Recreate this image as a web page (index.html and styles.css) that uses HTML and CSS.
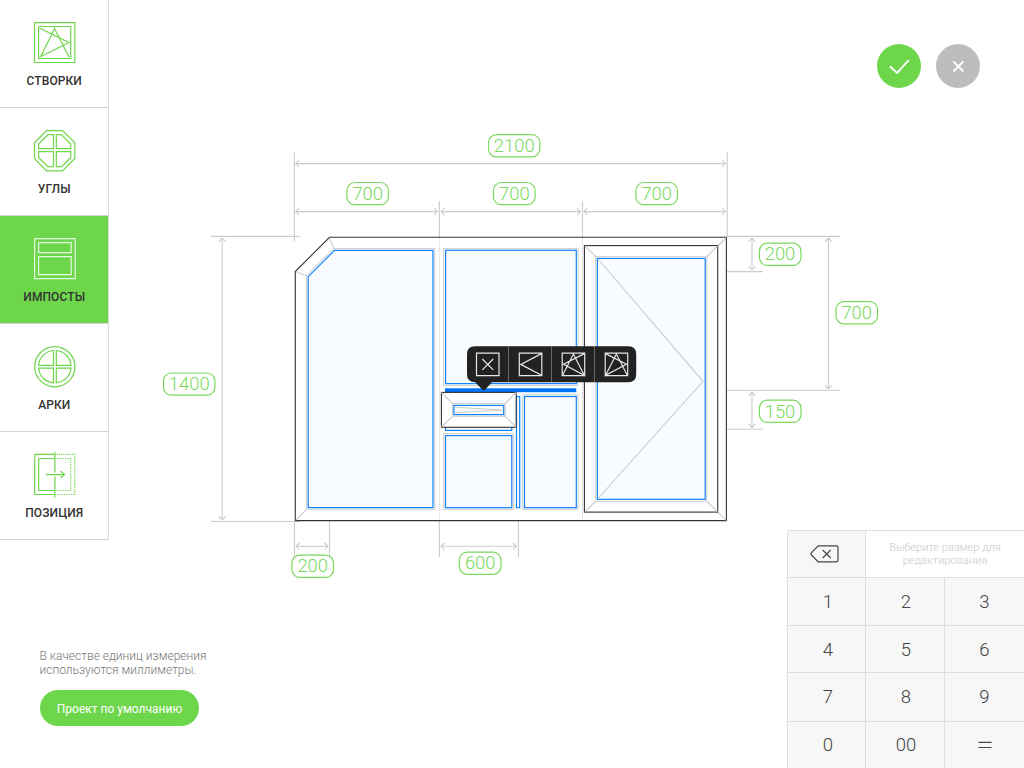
FILE: index.html
```
<!DOCTYPE html>
<html lang="ru">
<head>
<meta charset="utf-8">
<title>Конструктор окон</title>
<link rel="stylesheet" href="styles.css">
</head>
<body>
<div class="page">
  <main class="canvas">
    <svg class="drawing" width="1024" height="768" viewBox="0 0 1024 768">
      <defs>
        <marker id="tip" markerUnits="userSpaceOnUse" markerWidth="6" markerHeight="8" refX="4.5" refY="4" orient="auto-start-reverse">
          <path class="dim" d="M1 .7 4.5 4 1 7.3"/>
        </marker>
      </defs>

      <!-- extension lines -->
      <path class="dim" d="M294.3 152.500V241.500M727.300 152.500V237M439.400 201V237M582.500 201V237M211 236.400H299.500M211 521.500H299.500M727 236.400H840M727 271.600H763M727 390.300H840M727 429.300H763M294.500 521V560M329.500 521V557M439.400 521V557M518.400 521V557"/>
      <!-- dimension arrows -->
      <g class="dim arrows">
        <path d="M295.500 163.600H725.500"/>
        <path d="M295.500 211.600H437.500"/>
        <path d="M441 211.600H580.500"/>
        <path d="M584 211.600H725.500"/>
        <path d="M222.200 238V520"/>
        <path d="M752 238V270"/>
        <path d="M828.400 238V389"/>
        <path d="M752 392V427.500"/>
        <path d="M296 546.300H328"/>
        <path d="M441 546.300H516.500"/>
      </g>

      <!-- outer frame -->
      <path class="frame" d="M329.500 237.300H726.400V520.600H295.300V271.500Z"/>
      <path class="seam" d="M439.400 238V520M582.500 238V520"/>
      <path class="dim" d="M329.500 238 334 248.500M296 271.700 306.700 275.700M296 520 306.700 509.200M726 238 717.700 246M726 520.300 717.700 512"/>

      <!-- fixed glazing -->
      <path class="bead" d="M334 248.500H434.800V509.300H306.600V275.700Z"/>
      <path class="glass" d="M334.600 250.300H433V507.700H308.200V276.700Z"/>
      <rect class="bead" x="443.600" y="248.500" width="134.400" height="137"/>
      <rect class="glass" x="445.600" y="250.300" width="130.700" height="133.300"/>
      <rect class="bead" x="443.600" y="433.600" width="70" height="75.700"/>
      <rect class="glass" x="445.500" y="435.600" width="66.300" height="72.100"/>
      <rect class="bead" x="522.600" y="394.700" width="55.400" height="114.600"/>
      <rect class="glass" x="524.500" y="396.500" width="51.800" height="111.200"/>

      <!-- imposts -->
      <rect class="impost" x="445" y="388.300" width="131.300" height="3.900"/>
      <rect class="glass" x="516.500" y="396.500" width="3.200" height="111.200"/>
      <rect class="glass" x="445.500" y="426.500" width="66.300" height="3.900"/>

      <!-- transom sash -->
      <rect class="frame" x="441.400" y="392.400" width="74.800" height="34.900"/>
      <path class="dim" d="M441.500 392.500 452.500 403.500H505.200L516 392.500M441.500 427 452.500 416.300H505.200L516 427M452.500 403.500V416.300M505.200 403.500V416.300"/>
      <rect class="glass" x="453.900" y="405.400" width="49.800" height="9.200"/>
      <path class="dim" d="M455.500 407.300 502 410 455.500 412.700"/>

      <!-- door sash -->
      <rect class="frame" x="584.400" y="245.600" width="133.300" height="266.500"/>
      <rect class="bead" x="595.600" y="256.700" width="111.200" height="244.600"/>
      <path class="dim" d="M585 246 596 257M717.500 246 706.500 257M585 511.600 596 501M717.500 511.600 706.500 501"/>
      <rect class="glass" x="597.400" y="258.400" width="107.800" height="240.900"/>
      <path class="dim" d="M598.500 259.500 703 381.300 598.500 498"/>

      <!-- size labels -->
      <g class="size"><rect x="488.500" y="134.600" width="51.400" height="22.200" rx="8"/><text x="514.200" y="152.300">2100</text></g>
      <g class="size"><rect x="346.900" y="182.500" width="41.600" height="22.200" rx="8"/><text x="367.700" y="200.200">700</text></g>
      <g class="size"><rect x="493.500" y="182.500" width="41.600" height="22.200" rx="8"/><text x="514.300" y="200.200">700</text></g>
      <g class="size"><rect x="635.900" y="182.500" width="41.600" height="22.200" rx="8"/><text x="656.700" y="200.200">700</text></g>
      <g class="size"><rect x="759.400" y="243.200" width="41.600" height="22.200" rx="8"/><text x="780" y="260.400">200</text></g>
      <g class="size"><rect x="836" y="301.600" width="41.600" height="22.200" rx="8"/><text x="856.700" y="319.200">700</text></g>
      <g class="size"><rect x="759.400" y="400.200" width="41.600" height="22.200" rx="8"/><text x="780" y="417.700">150</text></g>
      <g class="size"><rect x="163.500" y="373" width="51.400" height="22.200" rx="8"/><text x="189.200" y="390.400">1400</text></g>
      <g class="size"><rect x="291.900" y="555.200" width="41.600" height="22.200" rx="8"/><text x="312.700" y="572.400">200</text></g>
      <g class="size"><rect x="459.400" y="552.100" width="41.600" height="22.200" rx="8"/><text x="480.200" y="569.400">600</text></g>

      <!-- sash type popover -->
      <path class="popover" d="M475 346.200H628.200Q636.200 346.200 636.200 354.200V374.200Q636.200 382.200 628.200 382.200H492L485.200 389.500Q483.700 391 482.200 389.500L475.300 382.200Q467 382.200 467 374.200V354.200Q467 346.200 475 346.200Z"/>
      <path class="split" d="M508.500 346.200V382.200M551.500 346.200V382.200M594.500 346.200V382.200"/>
      <g class="tool">
        <path d="M476.500 353.200H499V375.600H476.500ZM482.300 359 493.200 369.900M493.200 359 482.300 369.900"/>
        <path d="M519.300 353.200H541.800V375.600H519.300ZM541.500 353.600 520.800 364.400 541.500 375.300"/>
        <path d="M562.200 353.200H584.700V375.600H562.200ZM584.300 353.600 563.500 364.200 584.300 375.300 573.400 354 562.600 375.300"/>
        <path d="M605.200 353.200H627.700V375.600H605.200ZM605.600 353.600 626.400 364.200 605.600 375.300 616.400 354 627.300 375.300"/>
      </g>
    </svg>
  </main>

  <nav class="sidebar">
    <a class="item">
      <svg class="icon" viewBox="0 0 44 46"><path d="M1.500 2.600H41.800V42.500H1.500ZM5.600 6.500H37.700V38.500H5.600ZM7 8.200 36 22.500 7.800 36.500 21.600 8.500 36 37"/></svg>
      <span>СТВОРКИ</span>
    </a>
    <a class="item">
      <svg class="icon" viewBox="0 0 44 46"><path d="M13.500 2.600H29.500L41.800 14.800V30.500L29.500 42.800H13.500L1.500 30.500V14.800ZM20.500 6.700H15L5.600 16V20.700H20.500ZM23.300 6.700H28.500L37.700 16V20.700H23.300ZM20.500 23.700H5.600V29.700L15 38.700H20.500ZM23.300 23.700H37.700V29.700L28.500 38.700H23.300Z"/></svg>
      <span>УГЛЫ</span>
    </a>
    <a class="item active">
      <svg class="icon" viewBox="0 0 44 46"><path d="M1.600 2.700H42.200V42.700H1.600ZM5.600 6.600H38.200V16.700H5.600ZM5.600 20.700H38.200V38.700H5.600Z"/></svg>
      <span>ИМПОСТЫ</span>
    </a>
    <a class="item">
      <svg class="icon" viewBox="0 0 44 46"><circle cx="21.800" cy="22.700" r="20.100"/><path d="M20.500 6.500A16.300 16.300 0 0 0 5.600 21.300H20.500ZM23.300 6.500A16.300 16.300 0 0 1 38 21.300H23.300ZM20.500 38.900A16.300 16.300 0 0 1 5.600 24.200H20.500ZM23.300 38.900A16.300 16.300 0 0 0 38 24.200H23.300Z"/></svg>
      <span>АРКИ</span>
    </a>
    <a class="item">
      <svg class="icon" viewBox="0 0 44 46"><path d="M22 2.400H1.700V42.500H22M22 6.500H5.700V38.500H22M21.900 0V20.500M21.900 24.500V45.500M13 22.600H31.500M27.500 19.200 31.500 22.600 27.500 26"/><path class="dots" d="M23.500 2.400H41.800V42.500H23.500M23.500 6.500H37.700V38.500H23.500"/></svg>
      <span>ПОЗИЦИЯ</span>
    </a>
  </nav>

  <div class="actions">
    <button class="round ok"><svg width="44" height="44"><path d="M12.800 22.200 20 29 31.800 16.200"/></svg></button>
    <button class="round cancel"><svg width="44" height="44"><path d="M17.300 17.300 27.500 27.500M27.500 17.300 17.300 27.500"/></svg></button>
  </div>

  <section class="note">
    <p>В качестве единиц измерения<br>используются миллиметры.</p>
    <button class="primary">Проект по умолчанию</button>
  </section>

  <section class="keypad">
    <button class="key erase"><svg width="30" height="20"><path d="M8.200 1.800H26.500Q28 1.800 28 3.300V16.300Q28 17.800 26.500 17.800H8.200L1.500 11Q.5 9.800 1.500 8.600ZM12.700 6 20.700 14M20.700 6 12.700 14"/></svg></button>
    <div class="hint">Выберите размер для<br>редактирования</div>
    <button class="key first">1</button><button class="key mid">2</button><button class="key">3</button>
    <button class="key first low">4</button><button class="key mid low">5</button><button class="key low">6</button>
    <button class="key first">7</button><button class="key mid">8</button><button class="key">9</button>
    <button class="key first high">0</button><button class="key mid high">00</button>
    <button class="key high"><svg width="14" height="10"><path d="M.5 2.300H13.500M.5 7.500H13.500"/></svg></button>
  </section>
</div>
</body>
</html>
```

FILE: styles.css
```
* { box-sizing: border-box; }
body {
  margin: 0;
  background: #fff;
  color: #333;
  font-family: Roboto, "Liberation Sans", sans-serif;
}
button { border: 0; padding: 0; font: inherit; color: inherit; }
svg { display: block; fill: none; }

.page {
  display: grid;
  grid-template: 768px / 1024px;
  overflow: hidden;
}
.page > * { grid-area: 1 / 1; }

/* sidebar */
.sidebar {
  width: 109px;
  align-self: start;
  border-right: 1px solid #d9d9d9;
}
.item {
  display: flex;
  flex-direction: column;
  align-items: center;
  height: 108px;
  padding-top: 20px;
  border-bottom: 1px solid #d4d4d4;
  font-size: 12px;
  font-weight: 500;
  line-height: 16px;
  letter-spacing: .1px;
}
.item span { padding-left: .5px; }
.icon {
  width: 44px;
  height: 46px;
  margin: 0 0 7px 1px;
  stroke: #6dd64b;
  stroke-width: 1.2;
}
.dots { stroke-dasharray: 1.1 1.1; }
.active { background: #6dd64b; }
.active .icon { stroke: #e9fae4; }

/* round buttons */
.actions {
  justify-self: end;
  align-self: start;
  display: flex;
  gap: 15px;
  padding: 44px 44px 0 0;
}
.round { width: 44px; height: 44px; border-radius: 50%; }
.round svg { stroke: #fff; stroke-width: 1.9; }
.ok { background: #6dd64b; }
.cancel { background: #bdbdbd; }

/* drawing */
.dim { stroke: #ccc; stroke-width: 1.1; fill: none; }
.arrows path { marker-start: url(#tip); marker-end: url(#tip); }
.frame { stroke: #333; stroke-width: 1.1; fill: #fff; }
.bead { stroke: #d2d2d2; stroke-width: 1.1; fill: #fff; }
.glass { stroke: #1283ff; stroke-width: 1.2; fill: #f8fbff; }
.impost { fill: #0073fa; }
.seam { stroke: #ccc; stroke-width: 1; stroke-dasharray: 1 1; }
.size rect { stroke: #79d95b; stroke-width: 1.2; fill: #fff; }
.size text {
  fill: #79d95b;
  font-size: 18.400px;
  font-weight: 300;
  text-anchor: middle;
}
.popover { fill: #222; }
.split { stroke: #777; stroke-width: .8; }
.tool { stroke: #e8e8e8; stroke-width: 1.2; }

/* note */
.note {
  align-self: end;
  justify-self: start;
  padding: 0 0 42px 40px;
}
.note p {
  margin: 0 0 13px -.5px;
  color: #777;
  font-size: 12px;
  font-weight: 300;
  line-height: 14px;
}
.primary {
  width: 159px;
  height: 36px;
  padding-top: 1px;
  border-radius: 18px;
  background: #6dd64b;
  color: #fff;
  font-size: 12px;
}

/* keypad */
.keypad {
  align-self: end;
  justify-self: end;
  display: grid;
  grid-template-columns: 77px 78px 79px;
  grid-template-rows: 46px 47px 46px 48px 47px;
  gap: 1px;
  width: 237px;
  height: 238px;
  border: solid #dedede;
  border-width: 1px 0 0 1px;
  background: #dedede;
}
.key {
  display: grid;
  place-items: center;
  background: #f7f7f7;
  color: #444;
  font-size: 18.500px;
  font-weight: 300;
}
.first { padding-left: 3px; }
.mid { padding-left: 2px; }
.low { padding-top: 2px; }
.high { padding-bottom: 2px; }
.erase { padding-right: 3px; }
.key svg { stroke: #444; stroke-width: 1.2; }
.hint {
  grid-column: span 2;
  padding-top: 10px;
  background: #fff;
  color: #c9c9c9;
  font-size: 11.100px;
  font-weight: 300;
  line-height: 13px;
  text-align: center;
}
```
